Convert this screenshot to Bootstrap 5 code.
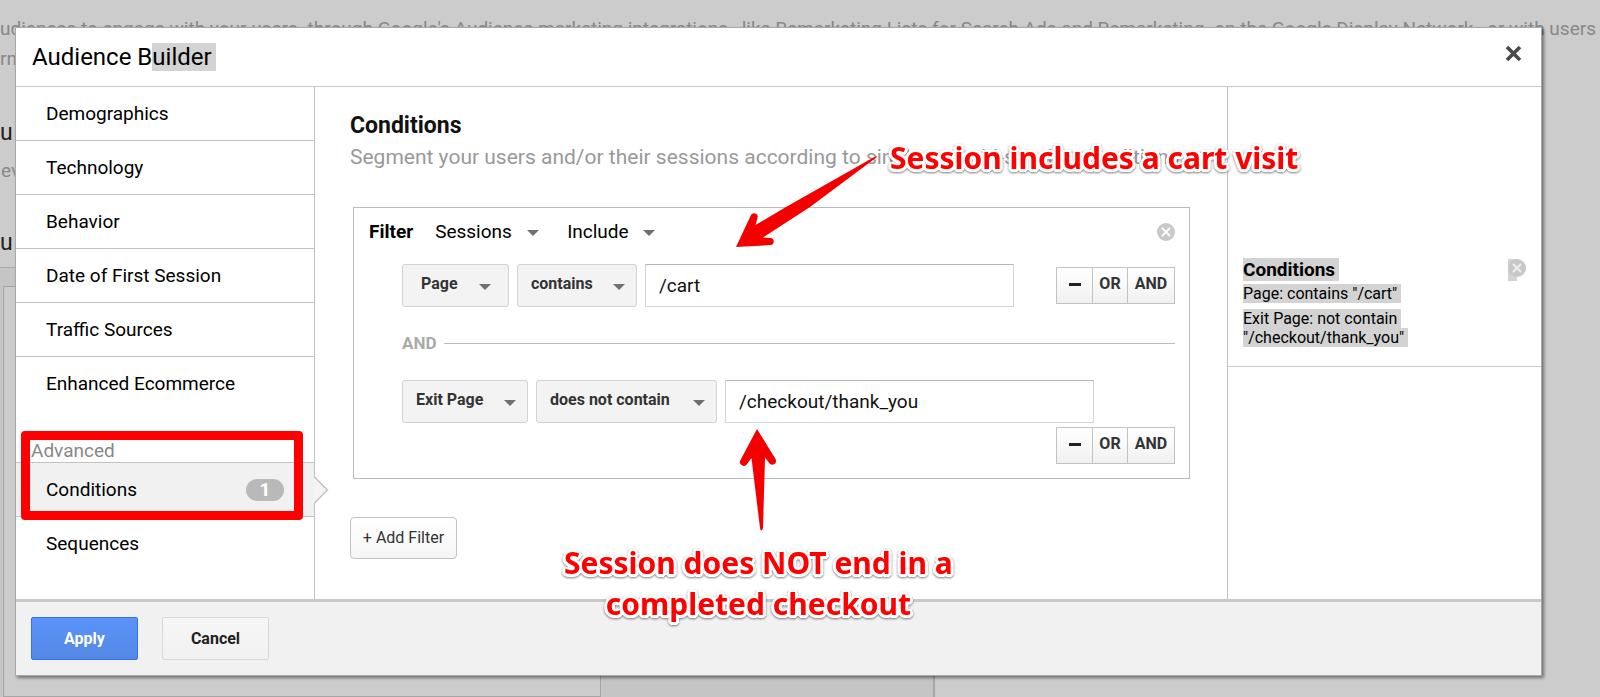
<!DOCTYPE html>
<html lang="en">
<head>
<meta charset="utf-8">
<meta name="viewport" content="width=device-width, initial-scale=1">
<title>Audience Builder</title>
<link rel="stylesheet" href="https://cdn.jsdelivr.net/npm/bootstrap@5.3.0/dist/css/bootstrap.min.css">
<style>
  body { font-family: Roboto, "Liberation Sans", sans-serif; font-size: 19px; line-height: 24px; color: #000; background: #ccc; }

  /* dimmed page behind the dialog */
  .backdrop-page { min-height: 100vh; color: #888; }
  .backdrop-page .intro { padding: 14px 4px 0 0; height: 117px; line-height: 30px; white-space: nowrap; }
  .backdrop-page .big { font-size: 23px; line-height: 32px; color: #222; }
  .backdrop-page .minor { height: 78px; padding: 10px 0 0 1px; }
  .backdrop-page .tabs-row { width: 935px; border-top: 1px solid #aaa; border-right: 2px solid #a6a6a6; background: #c5c5c5; height: 430px; padding: 18px 0 0 3px; margin-top: 8px; }
  .backdrop-page .panel-a { width: 598px; border: 1px solid #a6a6a6; background: #ccc; }

  /* dialog */
  .dialog-layer { padding: 28px 59px 21px 16px; }
  .dialog-box { background: #fff; box-shadow: 0 0 0 1px #a8a8a8, 2px 2px 3px 1px rgba(0,0,0,.45); }
  .dialog-head { height: 58px; padding: 0 15px 0 16px; }
  .dialog-head h1 { font-size: 24px; line-height: 28px; font-weight: 400; }
  .dialog-body { border-top: 1px solid #c8c8c8; border-bottom: 3px solid #c8c8c8; }
  .hl { background: #d3d3d3; }
  .icon-btn { border: 0; background: none; padding: 0; line-height: 0; }

  .side { width: 299px; border-right: 1px solid #c2c2c2; padding-bottom: 27px; }
  .side a { display: flex; align-items: center; height: 54px; padding: 0 30px; color: #000; text-decoration: none; border-bottom: 1px solid #c2c2c2; }
  .side a.plain { border-bottom-color: transparent; }
  .side a.current { background: #f1f1f1; position: relative; }
  .side h2 { font-size: 19px; line-height: 22px; font-weight: 400; color: #888; padding: 0 15px; border-bottom: 1px solid #c2c2c2; }
  .side .count { background: #b9b9b9; font-size: 19px; line-height: 22px; width: 38px; padding: 0; }
  .pointer { position: absolute; left: 100%; top: 13px; margin-left: -1px; }
  .adv { margin-top: 29px; }
  .red-frame { position: absolute; inset: -9px 11px -3px 5px; pointer-events: none; z-index: 2; }
  .red-frame::before { content: ""; position: absolute; inset: 0; border: 9px solid #f00; border-radius: 4px; }

  .main { padding: 25px 37px 40px 35px; }
  .main h2 { font-size: 23px; line-height: 28px; font-weight: 700; color: #111; }
  .sub-line { color: #999; font-size: 21px; line-height: 34px; white-space: nowrap; }
  .filter-box { border: 1px solid #bbb; margin: 33px 0 0 3px; padding: 12px 14px 14px 15px; }
  .filter-head { line-height: 24px; }
  select { appearance: none; border: 0; color: #000; background: no-repeat url("data:image/svg+xml,%3Csvg xmlns='http://www.w3.org/2000/svg' width='12' height='7'%3E%3Cpath d='M0 0h12L6 6z' fill='%23707070'/%3E%3C/svg%3E"); }
  .flat-select { background-position: right 10px; padding: 0; }
  .rows { padding-left: 33px; }
  .rows .wrap-tight { gap: 4px 8px; }
  .box-select { height: 43px; border: 1px solid #d2d2d2; border-radius: 3px; font-size: 16px; font-weight: 700; color: #333;
    background-color: #f3f3f3; background-position: right 11px top 19px; padding: 0 24px 4px 13px; }
  .box-select.roomy { padding-left: 18px; background-position: right 17px top 19px; }
  .text-in { width: 369px; height: 43px; border: 1px solid #d4d4d4; border-top-color: #b5b5b5; padding: 0 13px; color: #111; }
  .ops { margin-left: auto; align-self: center; }
  .ops .btn { height: 37px; width: 36px; padding: 0 0 3px; border: 1px solid #c2c2c2; border-radius: 0; margin-left: -1px; font-size: 16px; line-height: 20px; font-weight: 700; color: #333; background: linear-gradient(#fff, #f1f1f1); }
  .ops .btn.wide { width: 48px; }
  .ops .btn:first-child { width: 37px; margin-left: 0; }
  .ops svg { vertical-align: middle; }
  .joiner { color: #aaa; font-size: 17px; font-weight: 700; line-height: 24px; margin: 24px 0 25px; }
  .joiner span { height: 1px; background: #bbb; }
  .flat-btn { font-size: 16px; line-height: 22px; height: 42px; border: 1px solid #c2c2c2; border-radius: 4px; padding: 0; margin-top: 38px; color: #333; background: linear-gradient(#fff, #f5f5f5); width: 107px; }

  .summary { width: 314px; border-left: 1px solid #c2c2c2; }
  .summary-card { padding: 172px 15px 19px; border-bottom: 1px solid #ccc; font-size: 16px; line-height: 19px; }
  .summary-card h3 { font-size: 19px; line-height: 22px; font-weight: 700; margin: 0 0 3px; }
  .summary-card p { margin: 0 0 6px; }
  .half-hl { height: 22px; background: linear-gradient(90deg, #d3d3d3 9px, transparent 9px); }

  .dialog-foot { background: #f1f1f1; padding: 15px; gap: 24px; height: 73px; }
  .dialog-foot .btn { width: 107px; height: 43px; border-radius: 2px; font-size: 16px; line-height: 20px; font-weight: 700; padding: 0; }
  .btn-apply { color: #fff; background: linear-gradient(#5b93fb, #5488e4); border: 1px solid #2f74e8; }
  .btn-cancel { color: #222; background: linear-gradient(#f6f6f6, #f1f1f1); border: 1px solid #d8d8d8; }

  .note { position: absolute; z-index: 3; color: #f00; font: 700 30px/41px "Noto Sans", "Open Sans", sans-serif; white-space: nowrap; text-align: center; margin: 0;
    text-shadow: 2px 0 #fff, -2px 0 #fff, 0 2px #fff, 0 -2px #fff, 2px 2px #fff, -2px 2px #fff, 2px -2px #fff, -2px -2px #fff, 3px 1px #fff, -3px 1px #fff, 1px 3px #fff, -1px 3px #fff;
    filter: drop-shadow(0 1px 1px rgba(0,0,0,.5)); }
  .note-a { left: 575px; top: 50px; }
  .note-b { left: 249px; top: 455px; }
  .arrow { position: absolute; z-index: 3; pointer-events: none; }
  .arrow-a { left: 419px; top: 67px; }
  .arrow-b { left: 424px; top: 341px; }
</style>
</head>
<body>
<div class="position-relative overflow-hidden">
  <div class="backdrop-page" aria-hidden="true">
    <div class="intro">
      <div class="d-flex justify-content-between"><span>udiences to engage with your users</span><span>through Google's Audience marketing integrations,</span><span>like Remarketing Lists for Search Ads and Remarketing</span><span>on the Google Display Network,</span><span>or with users</span></div>
      <div>rn</div>
    </div>
    <div class="big">u</div>
    <div class="minor">ev</div>
    <div class="big">u</div>
    <div class="tabs-row d-flex"><div class="panel-a"></div></div>
  </div>

  <div class="dialog-layer position-absolute top-0 start-0 w-100">
    <div class="dialog-box" role="dialog" aria-labelledby="dlg-title">
      <header class="dialog-head d-flex align-items-center justify-content-between">
        <h1 class="m-0" id="dlg-title">Audience B<span class="hl pe-1">uilder</span></h1>
        <button class="icon-btn me-1 mb-2" type="button" aria-label="Close">
          <svg width="17" height="17" viewBox="0 0 17 17"><path d="M2 2l13 13M15 2L2 15" stroke="#4a4a4a" stroke-width="3.600"/></svg>
        </button>
      </header>

      <div class="dialog-body d-flex">
        <nav class="side flex-shrink-0">
          <a href="#">Demographics</a>
          <a href="#">Technology</a>
          <a href="#">Behavior</a>
          <a href="#">Date of First Session</a>
          <a href="#">Traffic Sources</a>
          <a href="#" class="plain">Enhanced Ecommerce</a>
          <div class="adv position-relative">
            <h2 class="m-0">Advanced</h2>
            <a href="#" class="current justify-content-between">Conditions <span class="badge rounded-pill count">1</span>
              <svg class="pointer" width="16" height="28" viewBox="0 0 16 28"><path d="M0 0h1v1l13 13L1 27v1H0z" fill="#f4f4f4"/><path d="M1.500 1L14.500 14 1.500 27" fill="none" stroke="#c2c2c2" stroke-width="1.500"/></svg>
            </a>
            <div class="red-frame"></div>
          </div>
          <a href="#" class="plain">Sequences</a>
        </nav>

        <main class="main flex-fill position-relative">
          <h2 class="m-0">Conditions</h2>
          <p class="sub-line m-0">Segment your users and/or their sessions according to single or multi-session conditions.</p>

          <section class="filter-box">
            <div class="filter-head d-flex align-items-center">
              <strong>Filter</strong>
              <select class="flat-select" style="width:104px;margin-left:22px" aria-label="Scope"><option>Sessions</option></select>
              <select class="flat-select" style="width:88px;margin-left:28px" aria-label="Mode"><option>Include</option></select>
              <button class="icon-btn ms-auto" type="button" aria-label="Remove filter">
                <svg width="18" height="18" viewBox="0 0 18 18"><circle cx="9" cy="9" r="9" fill="#c8c8c8"/><path d="M5 5l8 8M13 5l-8 8" stroke="#fff" stroke-width="2"/></svg>
              </button>
            </div>
            <div class="rows">
              <div class="d-flex flex-wrap wrap-tight mt-3 pt-1">
                <select class="box-select roomy" style="width:107px" aria-label="Dimension"><option>Page</option></select>
                <select class="box-select" style="width:120px" aria-label="Match"><option>contains</option></select>
                <input class="text-in" type="text" value="/cart" aria-label="Value">
                <div class="ops d-flex"><button class="btn" type="button" aria-label="Remove"><svg width="12" height="3"><path d="M0 0h12v3H0z" fill="#222"/></svg></button><button class="btn" type="button">OR</button><button class="btn wide" type="button">AND</button></div>
              </div>
              <div class="joiner d-flex align-items-center gap-2">AND<span class="flex-fill"></span></div>
              <div class="d-flex flex-wrap wrap-tight">
                <select class="box-select" style="width:126px" aria-label="Dimension"><option>Exit Page</option></select>
                <select class="box-select" style="width:181px" aria-label="Match"><option>does not contain</option></select>
                <input class="text-in" type="text" value="/checkout/thank_you" aria-label="Value">
                <div class="ops d-flex"><button class="btn" type="button" aria-label="Remove"><svg width="12" height="3"><path d="M0 0h12v3H0z" fill="#222"/></svg></button><button class="btn" type="button">OR</button><button class="btn wide" type="button">AND</button></div>
              </div>
            </div>
          </section>
          <button class="btn flat-btn" type="button">+ Add Filter</button>

          <p class="note note-a">Session includes a cart visit</p>
          <svg class="arrow arrow-a" width="146" height="96" viewBox="0 0 146 96"><path d="M142 2L52 53 21.500 71 23.500 64A3.600 3.600 0 0 0 17 61L2 93 37 91A3.600 3.600 0 0 0 37 84L29 83.500 76 53 143 3z" fill="#f40000"/></svg>
          <svg class="arrow arrow-b" width="40" height="106" viewBox="0 0 40 106"><path d="M18 1L36.500 31A3.800 3.800 0 0 1 31 36L26 29.500 24 100Q22 105 21 100L12.500 30 8 36A3.800 3.800 0 0 1 1.500 32z" fill="#f40000"/></svg>
          <p class="note note-b">Session does NOT end in a<br>completed checkout</p>
        </main>

        <aside class="summary flex-shrink-0">
          <div class="summary-card d-flex justify-content-between">
            <div>
              <h3><span class="hl pe-1">Conditions</span></h3>
              <p><span class="hl pe-1">Page: contains "/cart"</span></p>
              <p class="mb-0"><span class="hl pe-1">Exit Page: not contain</span><br><span class="hl pe-1">"/checkout/thank_you"</span></p>
            </div>
            <button class="icon-btn half-hl" type="button" aria-label="Remove conditions">
              <svg class="d-block mb-1" width="18" height="18" viewBox="0 0 18 18"><circle cx="9" cy="9" r="9" fill="#c8c8c8"/><path d="M5 5l8 8M13 5l-8 8" stroke="#eee" stroke-width="2"/></svg>
            </button>
          </div>
        </aside>
      </div>

      <footer class="dialog-foot d-flex">
        <button class="btn btn-apply" type="button">Apply</button>
        <button class="btn btn-cancel" type="button">Cancel</button>
      </footer>
    </div>
  </div>
</div>
<script src="https://cdn.jsdelivr.net/npm/bootstrap@5.3.0/dist/js/bootstrap.bundle.min.js"></script>
</body>
</html>
